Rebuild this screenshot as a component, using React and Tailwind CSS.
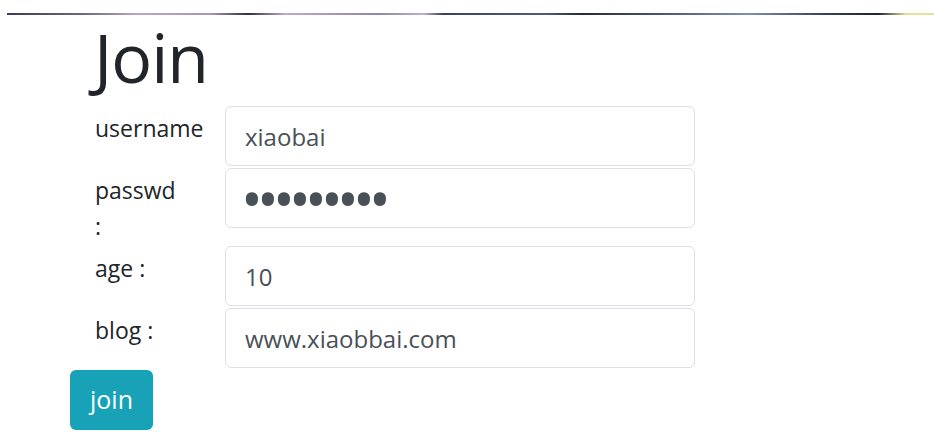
export default function App() {
  const labelStyle = "w-[90px] shrink-0 pt-[4px] text-[23px] leading-[36px] text-[#212529]";
  const inputStyle = "ml-[40px] h-[60px] w-[470px] rounded-[6px] border border-[#dcdfe3] bg-white px-[19px] text-[24px] text-[#495057] outline-none";

  return (
    <div className="min-h-screen bg-white font-['Open_Sans',sans-serif]">
      <div className="pt-[13px] pl-[7px]">
        <div className="h-[2px] w-full bg-[linear-gradient(to_right,#3a3d55_0%,#6a6585_8%,#b9a6c9_14%,#a995bd_22%,#2e3045_26%,#c2a8d0_30%,#8f86a8_40%,#bfb0cf_45%,#3b4160_47%,#525a80_58%,#262a3c_62%,#4a5070_70%,#8090b0_80%,#3a4060_88%,#1f2230_94%,#e8e0a0_97%,#e8e0a0_100%)]" />
      </div>

      <div className="pl-[70px]">
        <h1 className="ml-[24px] text-[68px] font-normal leading-[84px] tracking-[-1px] text-[#212529]">Join</h1>

        <form className="mt-[7px] flex flex-col gap-[2px]" onSubmit={(e) => e.preventDefault()}>
          <div className="ml-[25px] flex items-start">
            <label className={labelStyle}>username</label>
            <input type="text" defaultValue="xiaobai" className={inputStyle} />
          </div>
          <div className="ml-[25px] flex items-start">
            <label className={labelStyle}>passwd :</label>
            <input
              type="password"
              defaultValue="123456789"
              className="ml-[40px] h-[60px] w-[470px] rounded-[6px] border border-[#dcdfe3] bg-white pl-[15px] pr-[19px] text-[58px] leading-[58px] tracking-[-5.8px] text-[#495057] outline-none"
            />
          </div>
          <div className="ml-[25px] flex items-start">
            <label className={labelStyle}>age :</label>
            <input type="text" defaultValue="10" className={inputStyle} />
          </div>
          <div className="ml-[25px] flex items-start">
            <label className={labelStyle}>blog :</label>
            <input type="text" defaultValue="www.xiaobbai.com" className={inputStyle} />
          </div>
          <div>
            <button type="submit" className="h-[60px] rounded-[6px] bg-[#17a2b8] px-[20px] text-[25px] text-white">
              join
            </button>
          </div>
        </form>
      </div>
    </div>
  );
}
